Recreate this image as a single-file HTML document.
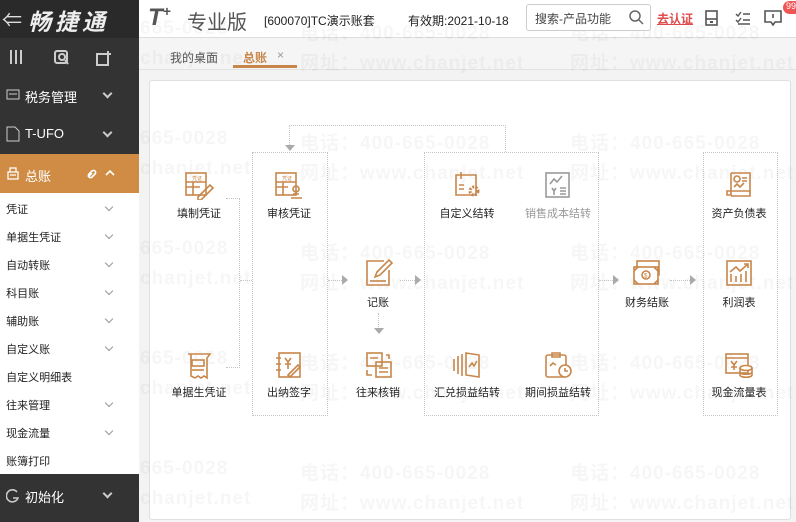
<!DOCTYPE html>
<html><head><meta charset="utf-8"><style>
*{margin:0;padding:0;box-sizing:border-box}
body{width:796px;height:522px;overflow:hidden;font-family:"Liberation Sans","Noto Sans CJK SC",sans-serif;font-size:12px;color:#222;background:#f3f3f3;position:relative}
.abs{position:absolute}
.sitem{position:absolute;left:0;width:139px;font-size:11px;color:#222}
.chev{position:absolute;width:6px;height:6px;border-right:1.5px solid #999;border-bottom:1.5px solid #999;transform:rotate(45deg)}
.chev.w{border-color:#ccc;width:7px;height:7px;border-width:2px}
.ico{position:absolute;width:30px;height:30px}
.lbl{position:absolute;width:90px;text-align:center;font-size:11px;color:#222}
.dot{position:absolute;border:1px dotted #c4c4c4}
.tri{position:absolute;width:0;height:0}
.wm{position:absolute;color:rgba(0,0,0,0.035);font-size:19px;font-weight:bold;white-space:nowrap;letter-spacing:1px}
</style></head><body>
<div class="abs" style="left:139px;top:0;width:657px;height:38px;background:#fff;border-bottom:1px solid #ddd"></div>
<div class="abs" style="left:139px;top:38px;width:657px;height:32px;background:#f5f5f5;border-bottom:1px solid #e2e2e2"></div>
<div class="abs" style="left:149px;top:80px;width:642px;height:440px;background:#fff;border:1px solid #e0e0e0;border-radius:3px"></div>

<div class="wm" style="left:140px;top:18px">665-0028</div>
<div class="wm" style="left:300px;top:18px">电话：400-665-0028</div>
<div class="wm" style="left:570px;top:18px">电话：400-665-0028</div>
<div class="wm" style="left:140px;top:48px">chanjet.net</div>
<div class="wm" style="left:300px;top:48px">网址：www.chanjet.net</div>
<div class="wm" style="left:570px;top:48px">网址：www.chanjet.net</div>
<div class="wm" style="left:140px;top:128px">665-0028</div>
<div class="wm" style="left:300px;top:128px">电话：400-665-0028</div>
<div class="wm" style="left:570px;top:128px">电话：400-665-0028</div>
<div class="wm" style="left:140px;top:158px">chanjet.net</div>
<div class="wm" style="left:300px;top:158px">网址：www.chanjet.net</div>
<div class="wm" style="left:570px;top:158px">网址：www.chanjet.net</div>
<div class="wm" style="left:140px;top:238px">665-0028</div>
<div class="wm" style="left:300px;top:238px">电话：400-665-0028</div>
<div class="wm" style="left:570px;top:238px">电话：400-665-0028</div>
<div class="wm" style="left:140px;top:268px">chanjet.net</div>
<div class="wm" style="left:300px;top:268px">网址：www.chanjet.net</div>
<div class="wm" style="left:570px;top:268px">网址：www.chanjet.net</div>
<div class="wm" style="left:140px;top:348px">665-0028</div>
<div class="wm" style="left:300px;top:348px">电话：400-665-0028</div>
<div class="wm" style="left:570px;top:348px">电话：400-665-0028</div>
<div class="wm" style="left:140px;top:378px">chanjet.net</div>
<div class="wm" style="left:300px;top:378px">网址：www.chanjet.net</div>
<div class="wm" style="left:570px;top:378px">网址：www.chanjet.net</div>
<div class="wm" style="left:140px;top:458px">665-0028</div>
<div class="wm" style="left:300px;top:458px">电话：400-665-0028</div>
<div class="wm" style="left:570px;top:458px">电话：400-665-0028</div>
<div class="wm" style="left:140px;top:488px">chanjet.net</div>
<div class="wm" style="left:300px;top:488px">网址：www.chanjet.net</div>
<div class="wm" style="left:570px;top:488px">网址：www.chanjet.net</div>

<div class="abs" style="left:148px;top:3px;font-size:24px;font-weight:bold;font-style:italic;color:#555">T<sup style="font-size:14px">+</sup></div>
<div class="abs" style="left:187px;top:6px;font-size:20px;color:#555">专业版</div>
<div class="abs" style="left:264px;top:12px;font-size:12px">[600070]TC演示账套</div>
<div class="abs" style="left:408px;top:12px;font-size:12px">有效期:2021-10-18</div>
<div class="abs" style="left:526px;top:4px;width:125px;height:27px;border:1px solid #ccc;border-radius:3px;background:#fff"></div>
<div class="abs" style="left:535px;top:10px;font-size:12px;color:#444">搜索-产品功能</div>
<svg class="abs" style="left:628px;top:9px" width="16" height="16"><circle cx="7" cy="7" r="5" fill="none" stroke="#666" stroke-width="1.5"/><line x1="11" y1="11" x2="15" y2="15" stroke="#666" stroke-width="1.5"/></svg>
<div class="abs" style="left:657px;top:10px;font-size:12px;color:#e04a4a;text-decoration:underline;font-weight:bold">去认证</div>
<svg class="abs" style="left:705px;top:10px" width="14" height="16"><rect x="1" y="1" width="11" height="14" fill="none" stroke="#555" stroke-width="1.6"/><line x1="1" y1="9" x2="12" y2="9" stroke="#555" stroke-width="1.6"/><rect x="5" y="11" width="3" height="2" fill="#555"/></svg>
<svg class="abs" style="left:735px;top:10px" width="16" height="16"><path d="M1 4l2 2 3-4M1 10l2 2 3-4M8 4h7M8 10h7M3 14h12" fill="none" stroke="#555" stroke-width="1.4"/></svg>
<svg class="abs" style="left:764px;top:10px" width="18" height="16"><path d="M1 1h16v11H11l-2 3-2-3H1z" fill="none" stroke="#555" stroke-width="1.6"/><line x1="9" y1="4" x2="9" y2="8" stroke="#555" stroke-width="1.6"/></svg>
<div class="abs" style="left:783px;top:1px;width:18px;height:13px;border-radius:7px;background:#e55;color:#fff;font-size:9px;padding-left:3px">99</div>

<div class="abs" style="left:170px;top:49px;color:#555;font-size:12px">我的桌面</div>
<div class="abs" style="left:243px;top:49px;color:#c8864a;font-size:12px;font-weight:bold">总账</div>
<div class="abs" style="left:277px;top:48px;color:#999;font-size:12px">×</div>
<div class="abs" style="left:233px;top:65px;width:64px;height:3px;background:#c8864a"></div>

<div class="abs" style="left:0;top:0;width:139px;height:522px;background:#fff"></div>
<div class="abs" style="left:0;top:0;width:139px;height:154px;background:#333"></div>
<div class="abs" style="left:0;top:0;width:139px;height:38px;background:#2a2a2a"></div>
<div class="abs" style="left:2px;top:4px;color:#ddd;font-size:20px">⇐</div>
<div class="abs" style="left:28px;top:3px;color:#eee;font-size:23px;font-weight:bold;font-style:italic;letter-spacing:4px">畅捷通</div>
<svg class="abs" style="left:9px;top:48px" width="110" height="20"><g fill="none" stroke="#ccc" stroke-width="2"><path d="M2 2v14M7 2v14M12 2v14"/><rect x="46" y="3" width="12" height="12" rx="2"/><circle cx="53" cy="9" r="3"/><path d="M56 12l3 4"/><path d="M98 6H88v11h11V8"/><path d="M96 6h6M99 3v6"/></g></svg>
<svg class="abs" style="left:6px;top:89px" width="14" height="11"><rect x="1" y="1" width="12" height="9" fill="none" stroke="#ccc"/><path d="M3 5h8" stroke="#ccc"/></svg>
<div class="abs" style="left:25px;top:87px;color:#fff;font-size:13px">税务管理</div>
<div class="chev w" style="left:104px;top:90px"></div>
<svg class="abs" style="left:6px;top:126px" width="14" height="16"><path d="M1 1h8l4 4v10H1z" fill="none" stroke="#ccc"/></svg>
<div class="abs" style="left:25px;top:126px;color:#fff;font-size:13px">T-UFO</div>
<div class="chev w" style="left:104px;top:129px"></div>
<div class="abs" style="left:0;top:154px;width:139px;height:39px;background:#d08c45"></div>
<svg class="abs" style="left:6px;top:166px" width="14" height="14"><path d="M2 6h10v7H2zM4 6V2h6v4M4 9h6" fill="none" stroke="#fff" stroke-width="1.3"/></svg>
<div class="abs" style="left:25px;top:166px;color:#fff;font-size:13px">总账</div>
<svg class="abs" style="left:86px;top:166px" width="30" height="14"><path d="M2 11l4-4M3 8l3-3a2 2 0 013 3l-3 3a2 2 0 01-3-3zM20 9l4-4 4 4" fill="none" stroke="#fff" stroke-width="1.6"/></svg>

<div class="sitem" style="top:201px">&nbsp;&nbsp;凭证</div><div class="chev" style="left:106px;top:204px"></div>
<div class="sitem" style="top:229px">&nbsp;&nbsp;单据生凭证</div><div class="chev" style="left:106px;top:232px"></div>
<div class="sitem" style="top:257px">&nbsp;&nbsp;自动转账</div><div class="chev" style="left:106px;top:260px"></div>
<div class="sitem" style="top:285px">&nbsp;&nbsp;科目账</div><div class="chev" style="left:106px;top:288px"></div>
<div class="sitem" style="top:313px">&nbsp;&nbsp;辅助账</div><div class="chev" style="left:106px;top:316px"></div>
<div class="sitem" style="top:341px">&nbsp;&nbsp;自定义账</div><div class="chev" style="left:106px;top:344px"></div>
<div class="sitem" style="top:369px">&nbsp;&nbsp;自定义明细表</div>
<div class="sitem" style="top:397px">&nbsp;&nbsp;往来管理</div><div class="chev" style="left:106px;top:400px"></div>
<div class="sitem" style="top:425px">&nbsp;&nbsp;现金流量</div><div class="chev" style="left:106px;top:428px"></div>
<div class="sitem" style="top:453px">&nbsp;&nbsp;账簿打印</div>
<div class="abs" style="left:0;top:474px;width:139px;height:48px;background:#333"></div>
<svg class="abs" style="left:6px;top:489px" width="14" height="14"><path d="M11 3A6 6 0 1012 9H7" fill="none" stroke="#ccc" stroke-width="1.6"/></svg>
<div class="abs" style="left:25px;top:487px;color:#fff;font-size:13px">初始化</div>
<div class="chev w" style="left:104px;top:490px"></div>

<div class="dot" style="left:289px;top:125px;width:217px;height:0;border-width:1px 0 0 0"></div>
<div class="dot" style="left:289px;top:125px;width:0;height:20px;border-width:0 0 0 1px"></div>
<div class="dot" style="left:505px;top:125px;width:0;height:27px;border-width:0 0 0 1px"></div>
<div class="tri" style="left:285px;top:145px;border-left:5px solid transparent;border-right:5px solid transparent;border-top:6px solid #aaa"></div>
<div class="dot" style="left:252px;top:152px;width:76px;height:264px"></div>
<div class="dot" style="left:424px;top:152px;width:175px;height:264px"></div>
<div class="dot" style="left:703px;top:152px;width:75px;height:264px"></div>
<div class="dot" style="left:226px;top:198px;width:14px;height:170px;border-left:0"></div>
<div class="dot" style="left:240px;top:280px;width:12px;height:0;border-width:1px 0 0 0"></div>
<div class="dot" style="left:328px;top:280px;width:14px;height:0;border-width:1px 0 0 0"></div>
<div class="tri" style="left:342px;top:275px;border-top:5px solid transparent;border-bottom:5px solid transparent;border-left:6px solid #aaa"></div>
<div class="dot" style="left:400px;top:280px;width:15px;height:0;border-width:1px 0 0 0"></div>
<div class="tri" style="left:415px;top:275px;border-top:5px solid transparent;border-bottom:5px solid transparent;border-left:6px solid #aaa"></div>
<div class="dot" style="left:378px;top:313px;width:0;height:16px;border-width:0 0 0 1px"></div>
<div class="tri" style="left:374px;top:328px;border-left:5px solid transparent;border-right:5px solid transparent;border-top:6px solid #aaa"></div>
<div class="dot" style="left:599px;top:280px;width:14px;height:0;border-width:1px 0 0 0"></div>
<div class="tri" style="left:613px;top:275px;border-top:5px solid transparent;border-bottom:5px solid transparent;border-left:6px solid #aaa"></div>
<div class="dot" style="left:670px;top:280px;width:20px;height:0;border-width:1px 0 0 0"></div>
<div class="tri" style="left:690px;top:275px;border-top:5px solid transparent;border-bottom:5px solid transparent;border-left:6px solid #aaa"></div>

<svg class="ico" style="left:184px;top:170px" viewBox="0 0 30 30"><g fill="none" stroke="#c8864a" stroke-width="1.6"><rect x="2" y="3" width="20" height="22"/><path d="M2 12h20M2 17h14M9 12v13"/><path d="M14 27l12-12 3 3-12 12h-3z"/></g><text x="8" y="10" font-size="5" fill="#c8864a">凭证</text></svg>
<svg class="ico" style="left:274px;top:170px" viewBox="0 0 30 30"><g fill="none" stroke="#c8864a" stroke-width="1.6"><rect x="2" y="3" width="20" height="22"/><path d="M2 12h20M2 17h12M9 12v13"/><circle cx="22" cy="19" r="3"/><path d="M17 28h11M19 24h6"/></g><text x="8" y="10" font-size="5" fill="#c8864a">凭证</text></svg>
<svg class="ico" style="left:452px;top:170px" viewBox="0 0 30 30"><g fill="none" stroke="#c8864a" stroke-width="1.6"><path d="M4 5h20v20H4z"/><path d="M9 2v7M7 15h5M7 19h5"/><circle cx="22" cy="21" r="4" stroke-width="3" stroke-dasharray="2 1.4"/></g></svg>
<svg class="ico" style="left:543px;top:170px" viewBox="0 0 30 30"><g fill="none" stroke="#999" stroke-width="1.6"><rect x="3" y="3" width="23" height="24"/><path d="M7 14l4-5 3 3 5-6M17 18h6M17 21h6M17 24h6M9 18l2 3 2-3M11 21v4"/></g></svg>
<svg class="ico" style="left:364px;top:258px" viewBox="0 0 30 30"><g fill="none" stroke="#c8864a" stroke-width="1.6"><path d="M20 3H3v24h22V12"/><path d="M11 19l2-5 12-12 3 3-12 12z"/><path d="M6 23h16"/></g></svg>
<svg class="ico" style="left:364px;top:350px" viewBox="0 0 30 30"><g fill="none" stroke="#c8864a" stroke-width="1.6"><rect x="3" y="3" width="15" height="13"/><rect x="12" y="12" width="15" height="15"/><path d="M6 8h8M15 18h9M15 22h9M22 5h3v4M3 20v5h5"/></g></svg>
<svg class="ico" style="left:184px;top:350px" viewBox="0 0 30 30"><g fill="none" stroke="#c8864a" stroke-width="1.6"><path d="M4 4h22l-3 4v20l-3-2-3 2-3-2-3 2-4-2V4"/><rect x="8" y="10" width="12" height="6"/><path d="M8 20h12"/></g></svg>
<svg class="ico" style="left:274px;top:350px" viewBox="0 0 30 30"><g fill="none" stroke="#c8864a" stroke-width="1.6"><rect x="5" y="3" width="21" height="24"/><path d="M2 8h5M2 14h5M2 20h5M11 8l3 4 3-4M14 12v7M11 14h6M14 25l10-10 2 2-10 10z"/></g></svg>
<svg class="ico" style="left:452px;top:350px" viewBox="0 0 30 30"><g fill="none" stroke="#c8864a" stroke-width="1.6"><path d="M2 9v12M6 6v18M10 4v22"/><path d="M14 3l13 2v22l-13-2z"/><path d="M17 17l3-4 2 3 3-5"/></g></svg>
<svg class="ico" style="left:543px;top:350px" viewBox="0 0 30 30"><g fill="none" stroke="#c8864a" stroke-width="1.6"><rect x="3" y="5" width="20" height="22" rx="2"/><path d="M9 3h8v4H9zM7 16l3-3 3 2"/><circle cx="22" cy="21" r="6" fill="#fff"/><path d="M22 18v3h3"/></g></svg>
<svg class="ico" style="left:632px;top:258px" viewBox="0 0 30 30"><g fill="none" stroke="#c8864a" stroke-width="1.6"><rect x="5" y="3" width="22" height="14"/><rect x="2" y="9" width="24" height="17" fill="#fff"/><circle cx="14" cy="17" r="4"/><path d="M2 13l4-4M26 13l-4-4M2 22l4 4M26 22l-4 4"/></g><text x="12" y="19.5" font-size="6" fill="#c8864a">$</text></svg>
<svg class="ico" style="left:724px;top:170px" viewBox="0 0 30 30"><g fill="none" stroke="#c8864a" stroke-width="1.6"><path d="M7 3h19v20"/><path d="M7 3v22H3v-4h23v5H7"/><circle cx="13" cy="9" r="3"/><path d="M18 8h5M18 11h5M10 17l3-3 3 3 4-4"/></g></svg>
<svg class="ico" style="left:724px;top:258px" viewBox="0 0 30 30"><g fill="none" stroke="#c8864a" stroke-width="1.6"><rect x="3" y="3" width="24" height="24"/><path d="M7 24v-8M12 24v-6M17 24v-8M22 24v-11M6 14l6-5 4 4 8-7M20 6h4v4"/></g></svg>
<svg class="ico" style="left:724px;top:350px" viewBox="0 0 30 30"><g fill="none" stroke="#c8864a" stroke-width="1.6"><rect x="2" y="4" width="22" height="19"/><path d="M2 8h22M7 11l3 4 3-4M10 15v5M7 17h6"/><ellipse cx="22" cy="18" rx="6" ry="2.5" fill="#fff"/><path d="M16 18v7c0 3 12 3 12 0v-7M16 22c0 3 12 3 12 0"/></g></svg>

<div class="lbl" style="left:154px;top:205px">填制凭证</div>
<div class="lbl" style="left:244px;top:205px">审核凭证</div>
<div class="lbl" style="left:422px;top:205px">自定义结转</div>
<div class="lbl" style="left:513px;top:205px;color:#999">销售成本结转</div>
<div class="lbl" style="left:694px;top:205px">资产负债表</div>
<div class="lbl" style="left:333px;top:294px">记账</div>
<div class="lbl" style="left:602px;top:294px">财务结账</div>
<div class="lbl" style="left:694px;top:294px">利润表</div>
<div class="lbl" style="left:154px;top:384px">单据生凭证</div>
<div class="lbl" style="left:244px;top:384px">出纳签字</div>
<div class="lbl" style="left:333px;top:384px">往来核销</div>
<div class="lbl" style="left:422px;top:384px">汇兑损益结转</div>
<div class="lbl" style="left:513px;top:384px">期间损益结转</div>
<div class="lbl" style="left:694px;top:384px">现金流量表</div>
</body></html>
